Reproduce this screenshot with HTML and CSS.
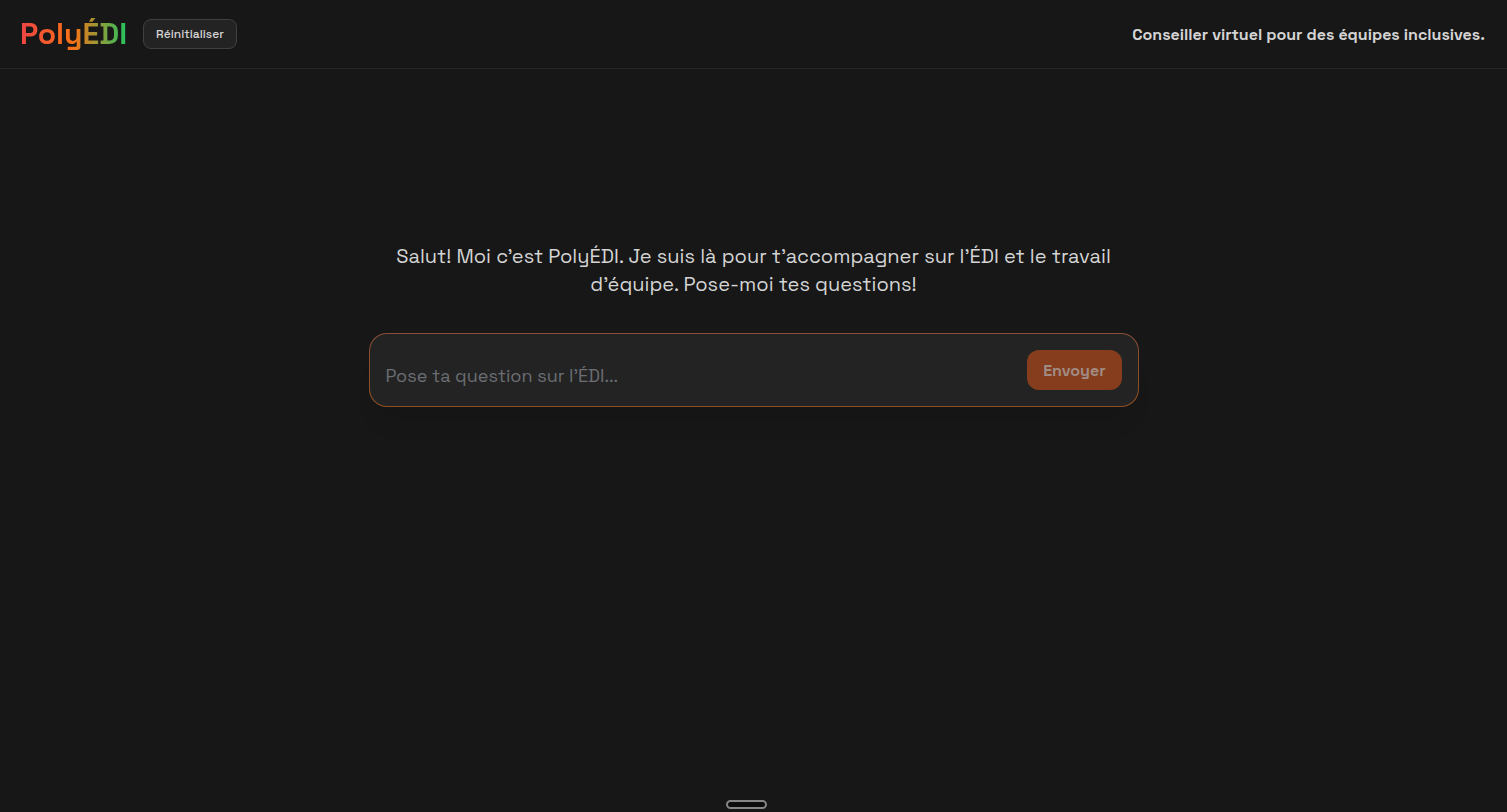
FILE: index.html
```html
<!DOCTYPE html>
<html lang="fr">
<head>
  <meta charset="UTF-8" />
  <meta name="viewport" content="width=device-width, initial-scale=1.0"/>
  <title>PolyÉDI</title>
  <link rel="stylesheet" href="styles.css">
</head>
<body>
  <header class="topbar">
    <div class="brand">
      <h1 class="logo">PolyÉDI</h1>
      <button type="button" class="reset" id="resetBtn">Réinitialiser</button>
    </div>
    <p class="tagline">Conseiller virtuel pour des équipes inclusives.</p>
  </header>

  <main class="chat">
    <p class="intro">Salut! Moi c’est PolyÉDI. Je suis là pour t’accompagner sur l’ÉDI et le travail d’équipe. Pose-moi tes questions!</p>

    <form class="composer" id="composer">
      <textarea id="question" rows="1" placeholder="Pose ta question sur l’ÉDI..." aria-label="Pose ta question"></textarea>
      <button type="submit" class="send" id="sendBtn" disabled>Envoyer</button>
    </form>
  </main>

  <div class="handle"></div>

  <script>
    const question = document.getElementById("question");
    const sendBtn = document.getElementById("sendBtn");

    function updateSend() {
      sendBtn.disabled = question.value.trim() === "";
    }

    question.addEventListener("input", updateSend);

    document.getElementById("resetBtn").addEventListener("click", () => {
      question.value = "";
      updateSend();
    });

    document.getElementById("composer").addEventListener("submit", (e) => {
      e.preventDefault();
    });
  </script>
</body>
</html>
```

FILE: styles.css
```css
* {
  box-sizing: border-box;
}

body {
  margin: 0;
  min-height: 100vh;
  background: #171717;
  color: #d4d4d4;
  font-family: "Space Grotesk", Inter, "Liberation Sans", sans-serif;
}

.topbar {
  display: flex;
  align-items: center;
  justify-content: space-between;
  min-height: 69px;
  padding: 0 22px 0 20px;
  border-bottom: 1px solid #262626;
}

.brand {
  display: flex;
  align-items: center;
  gap: 16px;
}

.logo {
  margin: 0;
  font-size: 30px;
  line-height: 36px;
  font-weight: 700;
  background: linear-gradient(to right, #ef4444, #f97316 50%, #22c55e);
  -webkit-background-clip: text;
  background-clip: text;
  color: transparent;
}

button {
  font-family: inherit;
  cursor: pointer;
}

.reset {
  height: 30px;
  padding: 0 12px;
  border: 1px solid #404040;
  border-radius: 8px;
  background: #232323;
  color: #d4d4d4;
  font-size: 12px;
  font-weight: 500;
}

.tagline {
  margin: 0;
  font-size: 16px;
  font-weight: 600;
}

.chat {
  max-width: 770px;
  margin: 0 auto;
  padding-top: 173px;
}

.intro {
  margin: 0 0 35px;
  padding: 0 16px;
  font-size: 20px;
  line-height: 28px;
  text-align: center;
}

.composer {
  display: flex;
  align-items: center;
  gap: 12px;
  padding: 16px;
  border: 1px solid transparent;
  border-radius: 18px;
  background:
    linear-gradient(#232323, #232323) padding-box,
    linear-gradient(#8a4f38, #8f4e20) border-box;
  box-shadow: 0 24px 24px -12px rgba(0, 0, 0, 0.1);
}

.composer textarea {
  flex: 1;
  min-width: 0;
  height: 40px;
  padding: 12px 0 0;
  border: 0;
  outline: 0;
  resize: none;
  overflow: hidden;
  background: transparent;
  color: #d4d4d4;
  font-family: inherit;
  font-size: 18px;
  line-height: 28px;
}

.composer textarea::placeholder {
  color: #6b6e73;
}

.send {
  height: 40px;
  padding: 0 16px;
  border: 0;
  border-radius: 12px;
  background: #ea580c;
  color: #fff;
  font-size: 16px;
  font-weight: 600;
}

.send:disabled {
  background: #853d1d;
  color: #a18c84;
  cursor: not-allowed;
}

.handle {
  position: fixed;
  bottom: 3px;
  left: calc(50% - 28px);
  width: 41px;
  height: 9px;
  border: 2px solid #858585;
  border-radius: 5px;
  background: #0c0c0c;
}
```
